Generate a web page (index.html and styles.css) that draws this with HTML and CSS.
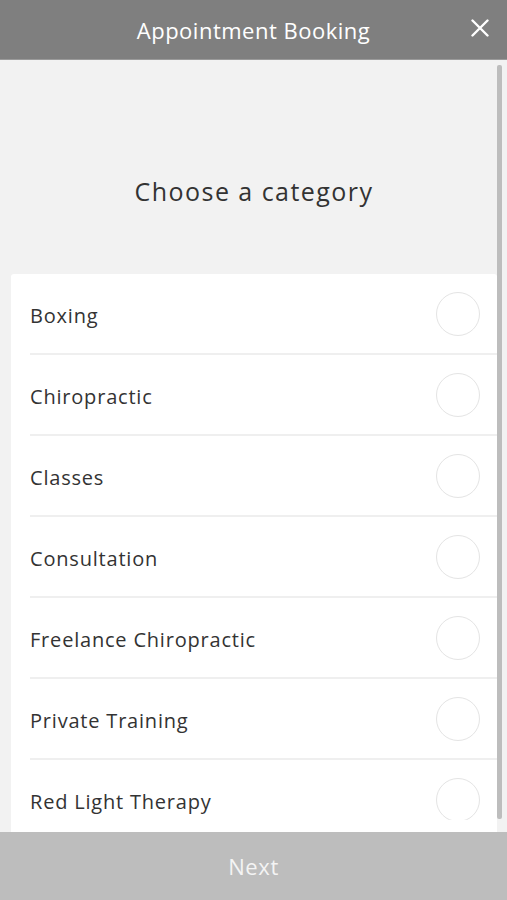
FILE: index.html
```html
<!DOCTYPE html>
<html lang="en">
<head>
<meta charset="utf-8">
<title>Appointment Booking</title>
<link rel="stylesheet" href="styles.css">
</head>
<body>
<div class="app">
  <header class="header">
    <h1 class="header-title">Appointment Booking</h1>
    <button class="close" aria-label="Close">
      <svg width="18" height="18" viewBox="0 0 18 18"><path d="M1.5 1.5 L16.5 16.5 M16.5 1.5 L1.5 16.5" stroke="#fff" stroke-width="2.4" stroke-linecap="round" fill="none"/></svg>
    </button>
  </header>
  <main class="scroll">
    <div class="intro"><h2 class="intro-title">Choose a category</h2></div>
    <ul class="card">
      <li class="row"><span class="label">Boxing</span><span class="radio"></span></li>
      <li class="row"><span class="label">Chiropractic</span><span class="radio"></span></li>
      <li class="row"><span class="label">Classes</span><span class="radio"></span></li>
      <li class="row"><span class="label">Consultation</span><span class="radio"></span></li>
      <li class="row"><span class="label">Freelance Chiropractic</span><span class="radio"></span></li>
      <li class="row"><span class="label">Private Training</span><span class="radio"></span></li>
      <li class="row"><span class="label">Red Light Therapy</span><span class="radio"></span></li>
    </ul>
    <div class="fade"></div>
    <div class="scrollbar"></div>
  </main>
  <footer class="next">Next</footer>
</div>
</body>
</html>
```
FILE: styles.css
```css
* { box-sizing: border-box; }
html, body { margin: 0; padding: 0; }
body {
  font-family: "Open Sans", "Noto Sans", sans-serif;
  background: #f2f2f2;
  color: #333;
}
.app {
  display: flex;
  flex-direction: column;
  height: 900px;
  width: 507px;
}
.header {
  position: relative;
  height: 60px;
  flex: 0 0 60px;
  background: #7f7f7f;
  border-bottom: 1px solid #9a9a9a;
  display: flex;
  align-items: center;
  justify-content: center;
}
.header-title {
  margin: 0;
  font-size: 22px;
  font-weight: 400;
  letter-spacing: 0.5px;
  color: #fff;
}
.close {
  position: absolute;
  right: 18px;
  top: 19px;
  width: 18px;
  height: 18px;
  padding: 0;
  border: 0;
  background: none;
  display: flex;
}
.scroll {
  position: relative;
  flex: 1 1 auto;
  overflow: hidden;
  background: #f2f2f2;
  padding: 0 10px 0 11px;
}
.intro {
  height: 214px;
  display: flex;
  align-items: flex-start;
  justify-content: center;
  padding-top: 113px;
}
.intro-title {
  margin: 0;
  font-size: 25px;
  line-height: 36px;
  font-weight: 400;
  letter-spacing: 1.45px;
  color: #333;
}
.card {
  list-style: none;
  margin: 0;
  padding: 0 0 0 19px;
  background: #fff;
  border-radius: 3px 3px 0 0;
}
.row {
  height: 81px;
  display: flex;
  align-items: center;
  justify-content: space-between;
  padding-right: 17px;
  border-bottom: 2px solid #efefef;
}
.label {
  font-size: 20px;
  letter-spacing: 0.8px;
  color: #333;
  padding-top: 4px;
}
.radio {
  width: 44px;
  height: 44px;
  border-radius: 50%;
  border: 1.5px solid #e4e4e4;
  margin-top: 1px;
}
.fade {
  position: absolute;
  left: 11px;
  right: 10px;
  bottom: 0;
  height: 12px;
  background: #fff;
}
.scrollbar {
  position: absolute;
  right: 5px;
  top: 5px;
  width: 5px;
  height: 754px;
  background: #bdbdbd;
  border-radius: 2px;
}
.next {
  flex: 0 0 68px;
  height: 68px;
  background: #bdbdbd;
  color: #f4f4f4;
  font-size: 22px;
  letter-spacing: 0.6px;
  display: flex;
  align-items: center;
  justify-content: center;
}
```
